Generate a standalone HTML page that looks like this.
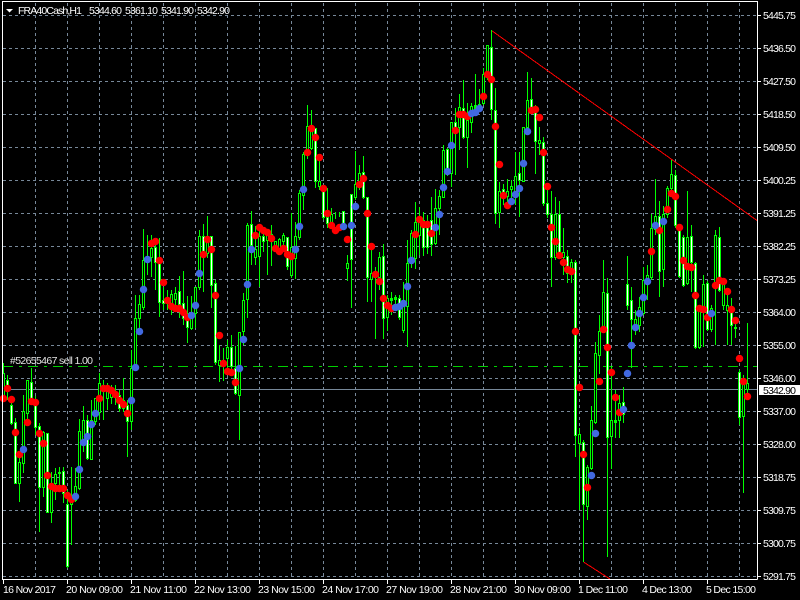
<!DOCTYPE html>
<html lang="en"><head><meta charset="utf-8"><title>FRA40Cash,H1</title>
<style>
html,body{margin:0;padding:0;background:#000;width:800px;height:600px;overflow:hidden}
svg{display:block}
text{font-family:"Liberation Sans",sans-serif;font-size:10.5px;fill:#fff}
</style></head><body>
<svg width="800" height="600" viewBox="0 0 800 600" xmlns="http://www.w3.org/2000/svg">
<rect width="800" height="600" fill="#000"/>
<g stroke="#778899" stroke-width="1" stroke-dasharray="3 3" fill="none" shape-rendering="crispEdges">
<path d="M3 15.5H757M3 48.5H757M3 81.5H757M3 114.5H757M3 147.5H757M3 180.5H757M3 213.5H757M3 246.5H757M3 279.5H757M3 312.5H757M3 345.5H757M3 378.5H757M3 411.5H757M3 444.5H757M3 477.5H757M3 510.5H757M3 543.5H757M3 576.5H757"/>
<path d="M35.5 3V579M67.5 3V579M99.5 3V579M131.5 3V579M163.5 3V579M195.5 3V579M227.5 3V579M259.5 3V579M291.5 3V579M323.5 3V579M355.5 3V579M387.5 3V579M419.5 3V579M451.5 3V579M483.5 3V579M515.5 3V579M547.5 3V579M579.5 3V579M611.5 3V579M643.5 3V579M675.5 3V579M707.5 3V579M739.5 3V579"/>
</g>
<path d="M3 389.5H757" stroke="#778899" stroke-width="1" shape-rendering="crispEdges"/>
<path d="M3 366.5H757" stroke="#00d000" stroke-width="1" stroke-dasharray="10 6 3 6" shape-rendering="crispEdges"/>
<path d="M491.5 30.5L757 220.5M583.5 562L610 579" stroke="#f00" stroke-width="1" fill="none" shape-rendering="crispEdges"/>
<g shape-rendering="crispEdges" fill="none">
<path stroke="#00ff00" stroke-width="1" d="M3.5 363V400M7.5 375V400M11.5 399V425M15.5 418V483M19.5 453V502M23.5 395V473M27.5 380V425M31.5 368V399M35.5 396V435M39.5 423V532M43.5 431V497M47.5 433V512M51.5 472V523M55.5 468V500M59.5 467V485M63.5 467V503M67.5 490V568M71.5 467V545M75.5 468V502M79.5 419V490M83.5 406V452M87.5 415V460M91.5 400V460M95.5 398V425M99.5 373V420M103.5 380V420M107.5 383V410M111.5 385V404M115.5 385V405M119.5 390V412M123.5 378V412M127.5 400V457M131.5 350V430M135.5 295V370M139.5 295V335M143.5 229V310M147.5 235V275M151.5 235V277M155.5 240V290M159.5 238V317M163.5 287V310M167.5 290V310M171.5 290V315M175.5 287V310M179.5 276V318M183.5 271V325M187.5 296V343M191.5 296V330M195.5 287V328M199.5 230V290M203.5 224V292M207.5 216V258M211.5 236V308M215.5 280V365M219.5 345V382M223.5 348V381M227.5 340V375M231.5 335V375M235.5 346V395M239.5 332V440M243.5 293V345M247.5 223V318M251.5 211V265M255.5 226V265M259.5 225V287M263.5 228V252M267.5 229V275M271.5 225V266M275.5 241V252M279.5 238V255M283.5 233V250M287.5 237V270M291.5 213V278M295.5 222V279M299.5 190V240M303.5 152V210M307.5 105V159M311.5 110V150M315.5 128V188M319.5 156V190M323.5 186V220M327.5 188V228M331.5 208V228M335.5 212V219M339.5 212V217M343.5 211V230M347.5 255V281M351.5 194V308M355.5 151V200M359.5 165V190M363.5 156V199M367.5 197V302M371.5 250V302M375.5 267V339M379.5 252V290M383.5 244V339M387.5 295V331M391.5 292V315M395.5 295V308M399.5 295V320M403.5 282V333M407.5 240V347M411.5 230V268M415.5 202V269M419.5 207V255M423.5 212V256M427.5 215V254M431.5 197V256M435.5 189V245M439.5 190V235M443.5 145V198M447.5 148V176M451.5 122V187M455.5 108V175M459.5 94V150M463.5 80V139M467.5 103V168M471.5 103V133M475.5 74V115M479.5 89V112M483.5 68V105M487.5 45V80M491.5 30V120M495.5 88V224M499.5 182V228M503.5 184V205M507.5 179V205M511.5 180V203M515.5 152V205M519.5 152V217M523.5 127V182M527.5 72V131M531.5 78V112M535.5 105V174M539.5 127V155M543.5 137V206M547.5 183V218M551.5 191V287M555.5 197V260M559.5 201V254M563.5 228V275M567.5 250V283M571.5 259V283M575.5 260V457M579.5 428V510M583.5 440V562M587.5 465V520M591.5 406V470M595.5 342V424M599.5 315V374M603.5 260V333M607.5 278V557M611.5 366V469M615.5 390V438M619.5 395V438M623.5 387V423M627.5 256V310M631.5 287V368M635.5 310V335M639.5 297V332M643.5 267V315M647.5 265V300M651.5 214V280M655.5 179V235M659.5 201V297M663.5 206V287M667.5 186V218M671.5 160V190M675.5 170V228M679.5 226V278M683.5 235V287M687.5 191V285M691.5 225V292M695.5 262V349M699.5 305V349M703.5 275V347M707.5 281V331M711.5 305V332M715.5 230V345M719.5 227V292M723.5 278V310M727.5 295V345M731.5 298V345M735.5 317V338M739.5 370V425M743.5 375V493M747.5 323V400"/>
<path stroke="#00ff00" stroke-width="3" d="M3.5 373V396M7.5 380V390M11.5 405V424M15.5 422V484M19.5 462V484M23.5 411V464M27.5 380V414M31.5 382V399M35.5 400V428M39.5 426V488M43.5 432V488M47.5 433V513M51.5 483V513M55.5 474V484M59.5 472V474M63.5 471V494M67.5 504V567M71.5 500V505M75.5 486V501M79.5 431V489M83.5 420V443M87.5 420V459M91.5 420V460M95.5 398V422M99.5 383V413M103.5 386V391M107.5 390V399M111.5 388V398M115.5 391V396M119.5 395V409M123.5 400V409M127.5 405V422M131.5 368V422M135.5 318V369M139.5 304V319M143.5 260V308M147.5 256V261M151.5 248V258M155.5 247V263M159.5 260V303M163.5 300V304M167.5 297V303M171.5 294V304M175.5 293V300M179.5 291V305M183.5 303V319M187.5 313V328M191.5 312V329M195.5 287V314M199.5 236V288M203.5 236V254M207.5 236V254M211.5 236V286M215.5 283V363M219.5 360V366M223.5 360V366M227.5 347V359M231.5 347V367M235.5 368V394M239.5 332V396M243.5 300V332M247.5 225V300M251.5 224V246M255.5 249V258M259.5 236V257M263.5 236V242M267.5 235V241M271.5 234V241M275.5 241V250M279.5 239V249M283.5 235V242M287.5 237V267M291.5 247V276M295.5 236V259M299.5 193V238M303.5 154V196M307.5 126V155M311.5 127V149M315.5 128V182M319.5 181V187M323.5 186V218M327.5 217V224M331.5 214V223M343.5 211V229M347.5 263V269M351.5 194V260M355.5 184V198M359.5 173V185M363.5 172V198M367.5 197V278M371.5 273V280M375.5 275V278M379.5 257V278M383.5 256V319M387.5 298V318M391.5 298V301M395.5 297V300M399.5 298V318M403.5 303V331M407.5 263V307M411.5 233V264M415.5 222V259M419.5 218V236M423.5 220V248M427.5 221V248M431.5 220V245M435.5 208V244M439.5 196V209M443.5 150V198M447.5 149V174M451.5 122V174M455.5 122V131M459.5 107V128M463.5 108V138M467.5 120V138M471.5 106V123M475.5 105V109M479.5 104V109M483.5 74V104M487.5 45V75M491.5 47V110M495.5 110V214M499.5 191V213M503.5 189V194M507.5 191V197M511.5 186V190M515.5 176V194M519.5 173V181M523.5 127V182M527.5 100V128M531.5 99V111M535.5 110V142M539.5 140V144M543.5 142V204M547.5 203V215M551.5 214V258M555.5 214V258M559.5 214V253M563.5 252V258M567.5 256V274M571.5 262V274M575.5 262V436M579.5 434V444M583.5 442V505M587.5 467V507M591.5 420V469M595.5 353V423M599.5 331V356M603.5 292V333M607.5 293V438M611.5 420V437M615.5 420V423M619.5 403V421M623.5 402V415M627.5 284V306M631.5 300V320M635.5 319V326M639.5 307V326M643.5 280V314M647.5 275V283M651.5 228V278M655.5 216V230M659.5 216V272M663.5 214V270M667.5 188V215M671.5 174V189M675.5 175V226M679.5 228V277M683.5 237V286M687.5 237V284M691.5 236V263M695.5 263V348M699.5 308V348M703.5 284V310M707.5 283V330M711.5 308V330M715.5 235V288M719.5 237V291M723.5 281V306M727.5 305V311M731.5 307V326M735.5 327V329M739.5 372V418M743.5 382V417M747.5 383V390"/>
<path stroke="#000" stroke-width="1" d="M3.5 374V395M19.5 463V483M23.5 412V463M27.5 381V413M43.5 433V487M51.5 484V512M55.5 475V483M71.5 501V504M75.5 487V500M79.5 432V488M83.5 421V442M91.5 421V459M95.5 399V421M99.5 384V412M107.5 391V398M111.5 389V397M115.5 392V395M123.5 401V408M131.5 369V421M135.5 319V368M139.5 305V318M143.5 261V307M147.5 257V260M151.5 249V257M167.5 298V302M171.5 295V303M175.5 294V299M191.5 313V328M195.5 288V313M199.5 237V287M207.5 237V253M219.5 361V365M223.5 361V365M227.5 348V358M239.5 333V395M243.5 301V331M247.5 226V299M255.5 250V257M259.5 237V256M267.5 236V240M275.5 242V249M279.5 240V248M283.5 236V241M291.5 248V275M295.5 237V258M299.5 194V237M303.5 155V195M307.5 127V154M311.5 128V148M319.5 182V186M331.5 215V222M347.5 264V268M355.5 185V197M359.5 174V184M371.5 274V279M379.5 258V277M387.5 299V317M403.5 304V330M407.5 264V306M411.5 234V263M415.5 223V258M419.5 219V235M435.5 209V243M439.5 197V208M443.5 151V197M451.5 123V173M459.5 108V127M467.5 121V137M471.5 107V122M479.5 105V108M483.5 75V103M487.5 46V74M499.5 192V212M507.5 192V196M511.5 187V189M515.5 177V193M523.5 128V181M527.5 101V127M539.5 141V143M555.5 215V257M563.5 253V257M571.5 263V273M579.5 435V443M587.5 468V506M591.5 421V468M595.5 354V422M599.5 332V355M603.5 293V332M611.5 421V436M619.5 404V420M635.5 320V325M639.5 308V325M643.5 281V313M647.5 276V282M651.5 229V277M655.5 217V229M663.5 215V269M667.5 189V214M671.5 175V188M687.5 238V283M699.5 309V347M703.5 285V309M711.5 309V329M715.5 236V287M723.5 282V305M727.5 306V310M743.5 383V416M747.5 384V389"/>
<path stroke="#fff" stroke-width="1" d="M7.5 381V389M11.5 406V423M15.5 423V483M31.5 383V398M35.5 401V427M39.5 427V487M47.5 434V512M63.5 472V493M67.5 505V566M87.5 421V458M103.5 387V390M119.5 396V408M127.5 406V421M155.5 248V262M159.5 261V302M163.5 301V303M179.5 292V304M183.5 304V318M187.5 314V327M203.5 237V253M211.5 237V285M215.5 284V362M231.5 348V366M235.5 369V393M251.5 225V245M263.5 237V241M271.5 235V240M287.5 238V266M315.5 129V181M323.5 187V217M327.5 218V223M343.5 212V228M351.5 195V259M363.5 173V197M367.5 198V277M383.5 257V318M399.5 299V317M423.5 221V247M427.5 222V247M431.5 221V244M447.5 150V173M455.5 123V130M463.5 109V137M491.5 48V109M495.5 111V213M503.5 190V193M519.5 174V180M531.5 100V110M535.5 111V141M543.5 143V203M547.5 204V214M551.5 215V257M559.5 215V252M567.5 257V273M575.5 263V435M583.5 443V504M607.5 294V437M623.5 403V414M627.5 285V305M631.5 301V319M659.5 217V271M675.5 176V225M679.5 229V276M683.5 238V285M691.5 237V262M695.5 264V347M707.5 284V329M719.5 238V290M731.5 308V325M739.5 373V417"/>
</g>
<g fill="none" stroke-width="7.5" stroke-linecap="round">
<path stroke="#ff0000" d="M3.5 398.5h0M7.5 388.5h0M11.5 399.5h0M15.5 432.5h0M19.5 454.5h0M27.5 422.5h0M31.5 401.5h0M35.5 402.5h0M39.5 433.5h0M43.5 443.5h0M47.5 475.5h0M51.5 486.5h0M55.5 488.5h0M59.5 488.5h0M63.5 488.5h0M67.5 495.5h0M71.5 499.5h0M99.5 398.5h0M103.5 388.5h0M107.5 388.5h0M111.5 390.5h0M115.5 394.5h0M119.5 400.5h0M123.5 404.5h0M127.5 413.5h0M151.5 243.5h0M155.5 241.5h0M159.5 260.5h0M163.5 282.5h0M167.5 300.5h0M171.5 306.5h0M175.5 308.5h0M179.5 308.5h0M183.5 312.5h0M187.5 317.5h0M203.5 254.5h0M207.5 239.5h0M211.5 249.5h0M215.5 295.5h0M219.5 335.5h0M223.5 363.5h0M227.5 371.5h0M231.5 372.5h0M235.5 382.5h0M255.5 235.5h0M259.5 227.5h0M263.5 230.5h0M267.5 232.5h0M271.5 238.5h0M275.5 248.5h0M279.5 251.5h0M283.5 248.5h0M287.5 254.5h0M291.5 256.5h0M307.5 152.5h0M311.5 128.5h0M315.5 137.5h0M319.5 157.5h0M323.5 188.5h0M327.5 213.5h0M331.5 225.5h0M335.5 230.5h0M339.5 227.5h0M347.5 239.5h0M359.5 184.5h0M363.5 178.5h0M367.5 213.5h0M371.5 246.5h0M375.5 274.5h0M379.5 281.5h0M383.5 298.5h0M387.5 305.5h0M391.5 308.5h0M415.5 234.5h0M419.5 219.5h0M423.5 224.5h0M427.5 224.5h0M431.5 233.5h0M455.5 130.5h0M459.5 114.5h0M463.5 114.5h0M467.5 116.5h0M483.5 96.5h0M487.5 74.5h0M491.5 79.5h0M495.5 126.5h0M499.5 164.5h0M503.5 195.5h0M507.5 205.5h0M531.5 110.5h0M535.5 109.5h0M539.5 117.5h0M543.5 152.5h0M547.5 186.5h0M551.5 227.5h0M555.5 241.5h0M559.5 255.5h0M563.5 262.5h0M567.5 269.5h0M571.5 271.5h0M575.5 331.5h0M579.5 387.5h0M583.5 454.5h0M587.5 487.5h0M599.5 381.5h0M603.5 329.5h0M607.5 347.5h0M611.5 372.5h0M615.5 397.5h0M619.5 412.5h0M651.5 251.5h0M659.5 230.5h0M667.5 209.5h0M671.5 193.5h0M675.5 196.5h0M679.5 227.5h0M683.5 260.5h0M687.5 266.5h0M691.5 267.5h0M695.5 295.5h0M699.5 308.5h0M703.5 309.5h0M707.5 317.5h0M715.5 285.5h0M719.5 280.5h0M723.5 281.5h0M727.5 291.5h0M731.5 309.5h0M735.5 320.5h0M739.5 358.5h0M743.5 381.5h0M747.5 396.5h0"/>
<path stroke="#4169e1" d="M23.5 449.5h0M75.5 496.5h0M79.5 469.5h0M83.5 442.5h0M87.5 436.5h0M91.5 424.5h0M95.5 413.5h0M131.5 400.5h0M135.5 367.5h0M139.5 331.5h0M143.5 289.5h0M147.5 259.5h0M191.5 315.5h0M195.5 305.5h0M199.5 273.5h0M239.5 368.5h0M243.5 339.5h0M247.5 284.5h0M251.5 249.5h0M295.5 249.5h0M299.5 226.5h0M303.5 189.5h0M343.5 226.5h0M351.5 225.5h0M355.5 206.5h0M395.5 307.5h0M399.5 306.5h0M403.5 303.5h0M407.5 286.5h0M411.5 260.5h0M435.5 227.5h0M439.5 214.5h0M443.5 187.5h0M447.5 171.5h0M451.5 145.5h0M471.5 113.5h0M475.5 112.5h0M479.5 108.5h0M511.5 201.5h0M515.5 194.5h0M519.5 188.5h0M523.5 163.5h0M527.5 131.5h0M591.5 475.5h0M595.5 433.5h0M623.5 409.5h0M627.5 373.5h0M631.5 345.5h0M635.5 327.5h0M639.5 313.5h0M643.5 297.5h0M647.5 281.5h0M655.5 225.5h0M663.5 221.5h0M711.5 313.5h0"/>
</g>
<path d="M2.5 2V579.5M2 1.5H757.5V579.5M2 579.5H757.5" fill="none" stroke="#fff" stroke-width="1" shape-rendering="crispEdges"/>
<path d="M3.5 580V584M67.5 580V584M131.5 580V584M195.5 580V584M259.5 580V584M323.5 580V584M387.5 580V584M451.5 580V584M515.5 580V584M579.5 580V584M643.5 580V584M707.5 580V584M758 15.5H761M758 48.5H761M758 81.5H761M758 114.5H761M758 147.5H761M758 180.5H761M758 213.5H761M758 246.5H761M758 279.5H761M758 312.5H761M758 345.5H761M758 378.5H761M758 411.5H761M758 444.5H761M758 477.5H761M758 510.5H761M758 543.5H761M758 576.5H761" fill="none" stroke="#fff" stroke-width="1" shape-rendering="crispEdges"/>
<path d="M6 9H13L9.5 12.5Z" fill="#fff"/>
<text x="18" y="14" textLength="64" lengthAdjust="spacing">FRA40Cash,H1</text>
<text x="89" y="14" textLength="33" lengthAdjust="spacing">5344.60</text>
<text x="125" y="14" textLength="33" lengthAdjust="spacing">5361.10</text>
<text x="161" y="14" textLength="33" lengthAdjust="spacing">5341.90</text>
<text x="197" y="14" textLength="33" lengthAdjust="spacing">5342.90</text>
<text x="10" y="364" textLength="83" lengthAdjust="spacing" style="fill:#e4e4e4">#52655467 sell 1.00</text>
<g>
<text x="763" y="19" textLength="33" lengthAdjust="spacing">5445.75</text><text x="763" y="52" textLength="33" lengthAdjust="spacing">5436.50</text><text x="763" y="85" textLength="33" lengthAdjust="spacing">5427.50</text><text x="763" y="118" textLength="33" lengthAdjust="spacing">5418.50</text><text x="763" y="151" textLength="33" lengthAdjust="spacing">5409.50</text><text x="763" y="184" textLength="33" lengthAdjust="spacing">5400.25</text><text x="763" y="217" textLength="33" lengthAdjust="spacing">5391.25</text><text x="763" y="250" textLength="33" lengthAdjust="spacing">5382.25</text><text x="763" y="283" textLength="33" lengthAdjust="spacing">5373.25</text><text x="763" y="316" textLength="33" lengthAdjust="spacing">5364.00</text><text x="763" y="349" textLength="33" lengthAdjust="spacing">5355.00</text><text x="763" y="382" textLength="33" lengthAdjust="spacing">5346.00</text><text x="763" y="415" textLength="33" lengthAdjust="spacing">5337.00</text><text x="763" y="448" textLength="33" lengthAdjust="spacing">5328.00</text><text x="763" y="481" textLength="33" lengthAdjust="spacing">5318.75</text><text x="763" y="514" textLength="33" lengthAdjust="spacing">5309.75</text><text x="763" y="547" textLength="33" lengthAdjust="spacing">5300.75</text><text x="763" y="580" textLength="33" lengthAdjust="spacing">5291.75</text>
</g>
<rect x="759" y="385" width="41" height="10" fill="#fff"/>
<text x="763" y="394" textLength="33" lengthAdjust="spacing" style="fill:#000">5342.90</text>
<g>
<text x="3" y="593" textLength="53" lengthAdjust="spacing">16 Nov 2017</text>
<text x="66" y="593" textLength="57" lengthAdjust="spacing">20 Nov 09:00</text>
<text x="130" y="593" textLength="57" lengthAdjust="spacing">21 Nov 11:00</text>
<text x="194" y="593" textLength="57" lengthAdjust="spacing">22 Nov 13:00</text>
<text x="258" y="593" textLength="57" lengthAdjust="spacing">23 Nov 15:00</text>
<text x="322" y="593" textLength="57" lengthAdjust="spacing">24 Nov 17:00</text>
<text x="386" y="593" textLength="57" lengthAdjust="spacing">27 Nov 19:00</text>
<text x="450" y="593" textLength="57" lengthAdjust="spacing">28 Nov 21:00</text>
<text x="514" y="593" textLength="57" lengthAdjust="spacing">30 Nov 09:00</text>
<text x="578" y="593" textLength="50" lengthAdjust="spacing">1 Dec 11:00</text>
<text x="642" y="593" textLength="50" lengthAdjust="spacing">4 Dec 13:00</text>
<text x="706" y="593" textLength="50" lengthAdjust="spacing">5 Dec 15:00</text>
</g>
</svg>
</body></html>
